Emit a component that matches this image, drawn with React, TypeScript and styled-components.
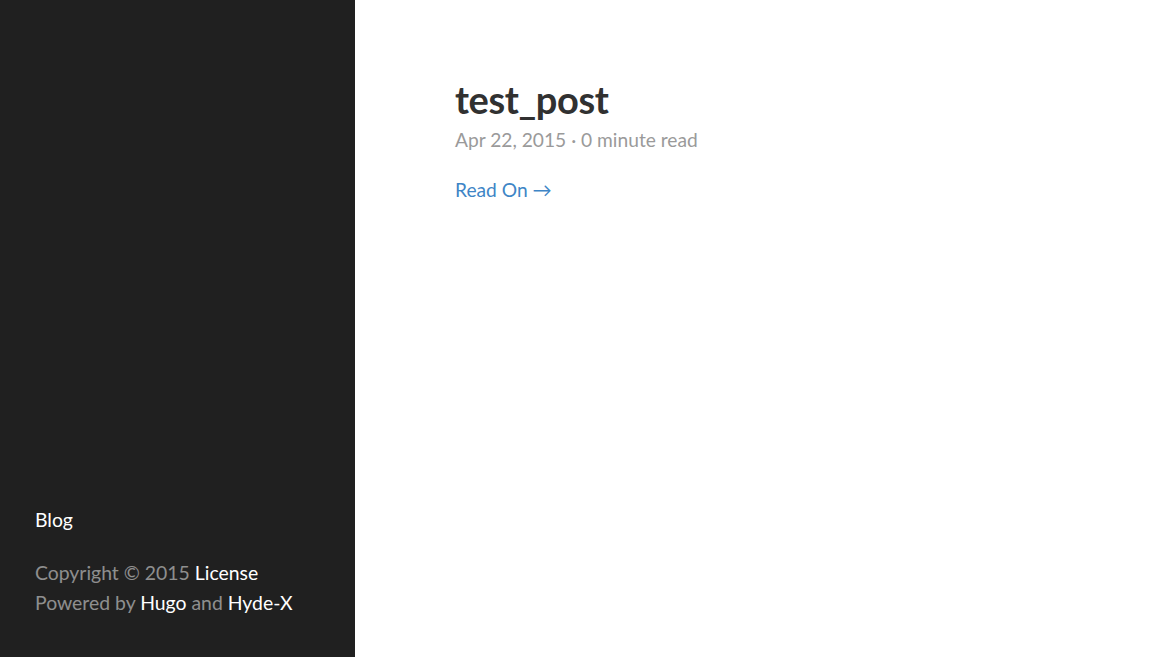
import React from "react";
import styled, { createGlobalStyle } from "styled-components";

const Global = createGlobalStyle`
  html, body { margin: 0; padding: 0; height: 100%; }
  body { font-family: "Lato", "Open Sans", sans-serif; background: #fff; }
  #root { height: 100%; }
`;

const Page = styled.div`
  display: flex;
  height: 657px;
  width: 1158px;
`;

const Sidebar = styled.aside`
  width: 355px;
  flex: none;
  background: #202020;
  color: rgba(255, 255, 255, 0.5);
  display: flex;
  flex-direction: column;
  justify-content: flex-end;
  padding: 0 35px 39px;
  box-sizing: border-box;
  font-size: 19.4px;
  line-height: 30px;
`;

const Nav = styled.nav`
  margin-bottom: 23px;
`;

const WhiteLink = styled.a`
  color: #fff;
  text-decoration: none;
`;

const FooterLine = styled.div``;

const Main = styled.main`
  flex: 1;
  padding: 75px 0 0 100px;
`;

const Title = styled.h1`
  margin: 0;
  font-size: 38px;
  line-height: 48px;
  font-weight: 700;
  color: #313131;
  letter-spacing: -0.4px;
`;

const PostDate = styled.div`
  color: #9a9a9a;
  font-size: 19.2px;
  line-height: 28px;
  margin-top: 3px;
  margin-bottom: 22px;
`;

const ReadOn = styled.a`
  color: #3e85c6;
  font-size: 19.2px;
  line-height: 28px;
  text-decoration: none;
`;

export default function App() {
  return (
    <>
      <Global />
      <Page>
        <Sidebar>
          <Nav>
            <WhiteLink href="#">Blog</WhiteLink>
          </Nav>
          <FooterLine>
            Copyright © 2015 <WhiteLink href="#">License</WhiteLink>
          </FooterLine>
          <FooterLine>
            Powered by <WhiteLink href="#">Hugo</WhiteLink> and{" "}
            <WhiteLink href="#">Hyde-X</WhiteLink>
          </FooterLine>
        </Sidebar>
        <Main>
          <Title>test_post</Title>
          <PostDate>Apr 22, 2015 · 0 minute read</PostDate>
          <ReadOn href="#">Read On →</ReadOn>
        </Main>
      </Page>
    </>
  );
}
